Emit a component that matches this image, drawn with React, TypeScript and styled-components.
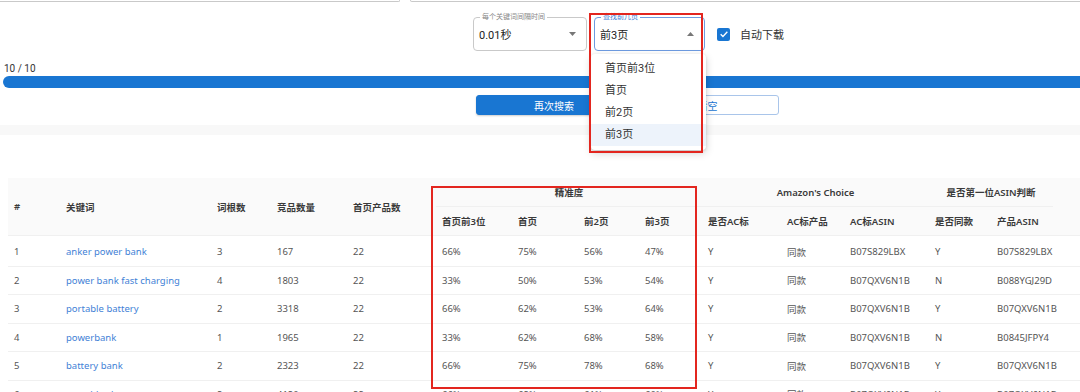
import React from "react";
import styled, { createGlobalStyle } from "styled-components";

const GlobalStyle = createGlobalStyle`
  html, body {
    margin: 0;
    padding: 0;
    background: #ffffff;
  }
  body {
    font-family: Roboto, "Noto Sans", "Noto Sans CJK SC", sans-serif;
    color: #333;
    overflow: hidden;
  }
`;

const Page = styled.div`
  position: relative;
  width: 1080px;
  height: 392px;
  overflow: hidden;
`;

const InputRow = styled.div`
  display: flex;
  gap: 10px;
  margin-left: -20px;
`;

const InputStub = styled.div<{ $w?: number }>`
  height: 1px;
  border: 1px solid #c9c9c9;
  border-top: none;
  border-radius: 0 0 4px 4px;
  ${(p) => (p.$w ? `width: ${p.$w}px;` : "flex: 1; margin-right: -20px;")}
`;

const Controls = styled.div`
  display: flex;
  align-items: center;
  margin: 15px 0 0 473px;
`;

const SelectBox = styled.div<{ $w: number; $focused?: boolean }>`
  position: relative;
  box-sizing: border-box;
  width: ${(p) => p.$w}px;
  height: 34px;
  margin-right: 7px;
  border: 1px solid ${(p) => (p.$focused ? "#6d9be0" : "#c9c9c9")};
  border-radius: 4px;
  display: flex;
  align-items: center;
  justify-content: space-between;
  padding: 0 10px 0 5px;
  font-size: 11px;
  color: #222;
`;

const SelectLabel = styled.span<{ $focused?: boolean }>`
  position: absolute;
  top: -6px;
  left: 6px;
  padding: 0 2px;
  background: #fff;
  font-size: 7px;
  line-height: 10px;
  color: ${(p) => (p.$focused ? "#3d7ad6" : "#888")};
`;

const Menu = styled.div`
  position: absolute;
  top: 36px;
  left: -4px;
  width: 115px;
  padding: 4px 0;
  background: #fff;
  border-radius: 4px;
  box-shadow: 0 3px 8px rgba(0, 0, 0, 0.18), 0 1px 3px rgba(0, 0, 0, 0.12);
  z-index: 5;
`;

const MenuItem = styled.div<{ $selected?: boolean }>`
  height: 22px;
  line-height: 22px;
  padding-left: 14px;
  font-size: 11px;
  color: #333;
  background: ${(p) => (p.$selected ? "#edf3fb" : "transparent")};
`;

const CheckRow = styled.label`
  display: flex;
  align-items: center;
  gap: 10px;
  margin-left: 5px;
  font-size: 11px;
  color: #333;
`;

const CheckBox = styled.span`
  width: 13px;
  height: 13px;
  border-radius: 2px;
  background: #1976d2;
  display: flex;
  align-items: center;
  justify-content: center;
`;

const Counter = styled.div`
  margin: 12px 0 0 4px;
  font-size: 10px;
  line-height: 12px;
  color: #333;
`;

const Progress = styled.div`
  margin: 1px 0 0 3px;
  width: 1090px;
  height: 12px;
  border-radius: 6px;
  background: #1976d2;
`;

const Buttons = styled.div`
  display: flex;
  gap: 4px;
  margin: 7px 0 0 476px;
`;

const Button = styled.button<{ $outlined?: boolean; $w: number }>`
  box-sizing: border-box;
  width: ${(p) => p.$w}px;
  height: 20px;
  border-radius: 3px;
  font-family: inherit;
  font-size: 10px;
  padding: 0;
  border: 1px solid ${(p) => (p.$outlined ? "#a9c5ea" : "#1976d2")};
  background: ${(p) => (p.$outlined ? "#fff" : "#1976d2")};
  color: ${(p) => (p.$outlined ? "#1976d2" : "#fff")};
  box-shadow: ${(p) => (p.$outlined ? "none" : "0 1px 2px rgba(0,0,0,0.2)")};
`;

const Band = styled.div`
  margin-top: 10px;
  height: 10px;
  background: #f8f8f8;
`;

const TableSection = styled.section`
  padding: 43px 0 0 8px;
  font-family: "Noto Sans", "Noto Sans CJK SC", sans-serif;
`;

const Table = styled.table`
  border-collapse: collapse;
  table-layout: fixed;
  width: 1072px;
  font-size: 9.5px;
`;

const Th = styled.th<{ $center?: boolean }>`
  position: relative;
  background: #fafafa;
  font-weight: 600;
  color: #3a3a3a;
  text-align: ${(p) => (p.$center ? "center" : "left")};
  padding: 0 6px;
  height: 28px;
  border-bottom: 1px solid #f0f0f0;
  white-space: nowrap;
`;

const Td = styled.td<{ $link?: boolean }>`
  height: 27.5px;
  padding: 0 6px;
  border-bottom: 1px solid #f0f0f0;
  color: ${(p) => (p.$link ? "#3f7fd6" : "#555")};
  white-space: nowrap;
`;

const FirstBodyRow = styled.tr`
  & > td {
    padding-top: 2px;
  }
`;

const Highlight = styled.div<{ $x: number; $y: number; $w: number; $h: number }>`
  position: absolute;
  left: ${(p) => p.$x}px;
  top: ${(p) => p.$y}px;
  width: ${(p) => p.$w}px;
  height: ${(p) => p.$h}px;
  border: 2px solid #e3261f;
  box-sizing: border-box;
  pointer-events: none;
  z-index: 6;
`;

const Caret = ({ up }: { up?: boolean }) => (
  <svg width="7" height="4" viewBox="0 0 7 4">
    <path d={up ? "M0 4 L3.5 0 L7 4 Z" : "M0 0 L3.5 4 L7 0 Z"} fill="#777" />
  </svg>
);

const widths = [52, 151, 60, 76, 89, 76, 66, 61, 63, 79, 63, 85, 62, 62, 28];

const rows = [
  ["1", "anker power bank", "3", "167", "22", "66%", "75%", "56%", "47%", "Y", "同款", "B07S829LBX", "Y", "B07S829LBX"],
  ["2", "power bank fast charging", "4", "1803", "22", "33%", "50%", "53%", "54%", "Y", "同款", "B07QXV6N1B", "N", "B088YGJ29D"],
  ["3", "portable battery", "2", "3318", "22", "66%", "62%", "53%", "64%", "Y", "同款", "B07QXV6N1B", "Y", "B07QXV6N1B"],
  ["4", "powerbank", "1", "1965", "22", "33%", "62%", "68%", "58%", "Y", "同款", "B07QXV6N1B", "N", "B0845JFPY4"],
  ["5", "battery bank", "2", "2323", "22", "66%", "75%", "78%", "68%", "Y", "同款", "B07QXV6N1B", "Y", "B07QXV6N1B"],
  ["6", "portable charger", "2", "4120", "22", "66%", "62%", "61%", "60%", "Y", "同款", "B07QXV6N1B", "Y", "B07QXV6N1B"],
];

export default function App() {
  return (
    <Page>
      <GlobalStyle />
      <InputRow>
        <InputStub $w={418} />
        <InputStub />
      </InputRow>

      <Controls>
        <SelectBox $w={114}>
          <SelectLabel>每个关键词间隔时间</SelectLabel>
          <span>0.01秒</span>
          <Caret />
        </SelectBox>
        <SelectBox $w={111} $focused>
          <SelectLabel $focused>查找前几页</SelectLabel>
          <span>前3页</span>
          <Caret up />
          <Menu>
            <MenuItem>首页前3位</MenuItem>
            <MenuItem>首页</MenuItem>
            <MenuItem>前2页</MenuItem>
            <MenuItem $selected>前3页</MenuItem>
          </Menu>
        </SelectBox>
        <CheckRow>
          <CheckBox>
            <svg width="10" height="10" viewBox="0 0 24 24">
              <path d="M4 12.5 L9.5 18 L20 6.5" fill="none" stroke="#fff" strokeWidth="3.2" />
            </svg>
          </CheckBox>
          自动下载
        </CheckRow>
      </Controls>

      <Counter>10 / 10</Counter>
      <Progress />

      <Buttons>
        <Button $w={156}>再次搜索</Button>
        <Button $outlined $w={143}>清空</Button>
      </Buttons>

      <Band />

      <TableSection>
        <Table>
          <colgroup>
            {widths.map((w, i) => (
              <col key={i} style={{ width: w }} />
            ))}
          </colgroup>
          <thead>
            <tr>
              <Th rowSpan={2}>#</Th>
              <Th rowSpan={2}>关键词</Th>
              <Th rowSpan={2}>词根数</Th>
              <Th rowSpan={2}>竞品数量</Th>
              <Th rowSpan={2}>首页产品数</Th>
              <Th colSpan={4} $center>精准度</Th>
              <Th colSpan={3} $center>Amazon's Choice</Th>
              <Th colSpan={2} $center>是否第一位ASIN判断</Th>
              <Th rowSpan={2} />
            </tr>
            <tr>
              <Th>首页前3位</Th>
              <Th>首页</Th>
              <Th>前2页</Th>
              <Th>前3页</Th>
              <Th>是否AC标</Th>
              <Th>AC标产品</Th>
              <Th>AC标ASIN</Th>
              <Th>是否同款</Th>
              <Th>产品ASIN</Th>
            </tr>
          </thead>
          <tbody>
            {rows.map((r, ri) => {
              const Row = ri === 0 ? FirstBodyRow : "tr";
              return (
                <Row key={r[0]}>
                  {r.map((c, i) => (
                    <Td key={i} $link={i === 1}>
                      {c}
                    </Td>
                  ))}
                  <Td />
                </Row>
              );
            })}
          </tbody>
        </Table>
      </TableSection>

      <Highlight $x={589} $y={13} $w={114} $h={140} />
      <Highlight $x={431} $y={186} $w={266} $h={203} />
    </Page>
  );
}
